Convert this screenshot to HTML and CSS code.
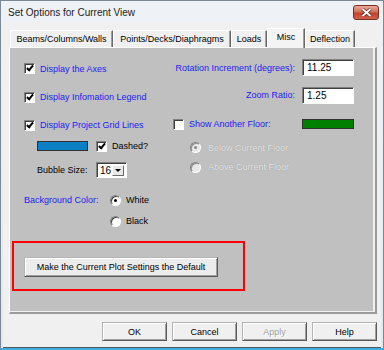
FILE: index.html
```html
<!DOCTYPE html>
<html lang="en">

<head>
  <meta charset="UTF-8">
  <title>Set Options for Current View</title>
  <link rel="stylesheet" href="styles.css">
</head>

<body>

  <div class="window">
    <div class="titlebar">
      <span class="title">Set Options for Current View</span>
      <span class="close">
        <svg width="11" height="9" viewBox="0 0 11 9">
          <path d="M1.5 1 L9.5 8 M9.5 1 L1.5 8" stroke="#5a2018" stroke-width="3.2" />
          <path d="M1.5 1 L9.5 8 M9.5 1 L1.5 8" stroke="#fff" stroke-width="1.8" />
        </svg>
      </span>
    </div>

    <div class="client">
      <div class="tabs">
        <div class="tab tab-beams">Beams/Columns/Walls</div>
        <div class="tab tab-points">Points/Decks/Diaphragms</div>
        <div class="tab tab-loads">Loads</div>
        <div class="tab tab-misc active">Misc</div>
        <div class="tab tab-deflection">Deflection</div>
      </div>

      <div class="page">
        <div class="panel">
          <div class="columns">
            <!-- left side -->
            <div class="col-left">
              <div class="row">
                <span class="check on"></span>
                <span class="label blue">Display the Axes</span>
              </div>
              <div class="row">
                <span class="check on"></span>
                <span class="label blue">Display Infomation Legend</span>
              </div>
              <div class="row">
                <span class="check on"></span>
                <span class="label blue">Display Project Grid Lines</span>
              </div>
              <div class="row indent">
                <span class="swatch swatch-blue"></span>
                <span class="check on"></span>
                <span class="label">Dashed?</span>
              </div>
              <div class="row indent">
                <span class="label bubble-label">Bubble Size:</span>
                <span class="combo">
                  <span class="combo-value">16</span>
                  <span class="combo-arrow"></span>
                </span>
              </div>
              <div class="row">
                <span class="label blue bg-label">Background Color:</span>
                <span class="radio on"></span>
                <span class="label">White</span>
              </div>
              <div class="row radio-only">
                <span class="radio"></span>
                <span class="label">Black</span>
              </div>
            </div>

            <!-- right side -->
            <div class="col-right">
              <div class="row field">
                <span class="label blue">Rotation Increment (degrees):</span>
                <span class="textbox">11.25</span>
              </div>
              <div class="row field">
                <span class="label blue">Zoom Ratio:</span>
                <span class="textbox">1.25</span>
              </div>
              <div class="row">
                <span class="check"></span>
                <span class="label blue">Show Another Floor:</span>
                <span class="swatch swatch-green"></span>
              </div>
              <div class="row sub">
                <span class="radio disabled on"></span>
                <span class="label muted">Below Current Floor</span>
              </div>
              <div class="row sub">
                <span class="radio disabled"></span>
                <span class="label muted">Above Current Floor</span>
              </div>
            </div>
          </div>

          <div class="highlight">
            <button class="btn btn-default">Make the Current Plot Settings the Default</button>
          </div>
        </div>
      </div>

      <div class="footer">
        <button class="btn">OK</button>
        <button class="btn">Cancel</button>
        <button class="btn" disabled>Apply</button>
        <button class="btn">Help</button>
      </div>
    </div>
  </div>

</body>

</html>
```

FILE: styles.css
```css
body {
  margin: 0;
  font-family: "Liberation Sans", Arial, sans-serif;
  font-size: 9px;
  color: #000;
  background-color: #fff;
}

.window {
  width: 384px;
  height: 350px;
  box-sizing: border-box;
  display: flex;
  flex-direction: column;
  background: linear-gradient(#eef2f6, #e2e8ef);
  border: 1px solid #7d8895;
  border-bottom: 2px solid #3fb0dc;
  padding: 0 2px;
}

.titlebar {
  height: 21px;
  display: flex;
  align-items: center;
  justify-content: space-between;
  padding-left: 5px;
}

.title {
  font-size: 10px;
  color: #1c1c1c;
  padding-top: 2px;
}

.close {
  width: 26px;
  height: 15px;
  box-sizing: border-box;
  margin-right: 2px;
  margin-top: 2px;
  display: flex;
  align-items: center;
  justify-content: center;
  border: 1px solid #7b2e22;
  border-radius: 3px;
  background: linear-gradient(#e9a99c, #d46f5c 45%, #c2412b 55%, #d0634c);
}

.client {
  flex: 1;
  background-color: #f0f0f0;
  border-bottom: 1px solid #4e5865;
  display: flex;
  flex-direction: column;
}

/* tab strip */
.tabs {
  display: flex;
  height: 19px;
  margin-top: 6px;
  padding-left: 7px;
  align-items: flex-end;
}

.tab {
  height: 17px;
  box-sizing: border-box;
  display: flex;
  align-items: center;
  justify-content: center;
  background-color: #f0f0f0;
  border-top: 1px solid #fff;
  border-left: 1px solid #fff;
  border-right: 1px solid #6a6a6a;
  box-shadow: inset -1px 0 #a0a0a0;
  padding-bottom: 1px;
}

.tab-beams { width: 103px; }
.tab-points { width: 118px; }
.tab-loads { width: 36px; }
.tab-misc { width: 38px; }
.tab-deflection { width: 50px; }

.tab.active {
  height: 20px;
  margin-bottom: -1px;
  position: relative;
  background-color: #f4f4f4;
  padding-bottom: 3px;
}

/* tab page */
.page {
  margin-left: 6px;
  width: 368px;
  height: 267px;
  box-sizing: border-box;
  border-top: 1px solid #fff;
  border-left: 1px solid #fff;
  border-right: 2px solid #9a9a9a;
  border-bottom: 2px solid #9a9a9a;
  padding: 0 2px 1px 0;
}

.panel {
  height: 100%;
  background-color: #c0c0c0;
  padding: 6px 0 0 14px;
  box-sizing: border-box;
}

.columns {
  display: flex;
}

.col-left {
  width: 149px;
  display: grid;
  grid-template-rows: 29px 28px 28px 14px 33px 28px 14px;
}

.col-right {
  width: 181px;
  display: grid;
  grid-template-rows: 27px 28px 30px 17px 22px;
  align-content: start;
}

.row {
  display: flex;
  align-items: center;
  white-space: nowrap;
}

.row .check + .label,
.row .radio + .label {
  margin-left: 5px;
}

.indent {
  padding-left: 13px;
}

.field {
  justify-content: flex-end;
  gap: 7px;
}

.sub {
  padding-left: 17px;
}

.sub .radio + .label {
  margin-left: 7px;
}

.blue {
  color: #1c1cf4;
}

.muted {
  color: #e8e8e8;
  text-shadow: 0 0 1px #8c8c8c;
}

/* checkbox */
.check {
  position: relative;
  width: 11px;
  height: 11px;
  box-sizing: border-box;
  flex-shrink: 0;
  background-color: #fff;
  border: 1px solid;
  border-color: #808080 #fff #fff #808080;
  box-shadow: inset 1px 1px #404040;
}

.check.on::after {
  content: "";
  position: absolute;
  left: 3px;
  top: 0px;
  width: 2px;
  height: 5px;
  border-right: 2px solid #000;
  border-bottom: 2px solid #000;
  transform: rotate(40deg);
}

.indent .check {
  margin-left: 8px;
}

/* radio */
.radio {
  position: relative;
  width: 11px;
  height: 11px;
  box-sizing: border-box;
  flex-shrink: 0;
  border-radius: 50%;
  background-color: #fff;
  border: 1px solid;
  border-color: #808080 #fff #fff #808080;
  box-shadow: inset 1px 1px #404040;
}

.radio.on::after {
  content: "";
  position: absolute;
  left: 3px;
  top: 3px;
  width: 3px;
  height: 3px;
  border-radius: 50%;
  background-color: #000;
}

.radio.disabled {
  background-color: #e8e8e8;
  box-shadow: inset 1px 1px #909090;
}

.radio.disabled.on::after {
  background-color: #8a8a8a;
}

.bg-label {
  width: 86px;
}

.radio-only {
  padding-left: 86px;
}

/* colour swatches */
.swatch {
  height: 10px;
  box-sizing: border-box;
  border: 1px solid #303030;
  flex-shrink: 0;
}

.swatch-blue {
  width: 51px;
  background-color: #0a7fc4;
}

.swatch-green {
  width: 52px;
  margin-left: auto;
  background-color: #007f00;
}

/* text boxes and combo */
.textbox,
.combo {
  box-sizing: border-box;
  background-color: #fff;
  border: 1px solid;
  border-color: #808080 #fff #fff #808080;
  box-shadow: inset 1px 1px #404040;
  font-size: 10px;
}

.textbox {
  width: 52px;
  height: 17px;
  display: flex;
  align-items: center;
  padding-left: 4px;
}

.bubble-label {
  width: 59px;
}

.combo {
  width: 31px;
  height: 16px;
  display: flex;
  align-items: stretch;
  padding: 2px 2px 1px 3px;
}

.combo-value {
  flex: 1;
  display: flex;
  align-items: center;
}

.combo-arrow {
  width: 12px;
  box-sizing: border-box;
  background-color: #e8e8e8;
  border: 1px solid;
  border-color: #fff #6a6a6a #6a6a6a #fff;
  display: flex;
  align-items: center;
  justify-content: center;
}

.combo-arrow::after {
  content: "";
  border-left: 3px solid transparent;
  border-right: 3px solid transparent;
  border-top: 3px solid #000;
  margin-top: 1px;
}

/* highlighted default button */
.highlight {
  width: 233px;
  height: 50px;
  box-sizing: border-box;
  margin: 13px 0 0 -12px;
  border: 2px solid #ff0000;
  padding: 14px 0 0 10px;
}

.btn {
  font-family: inherit;
  font-size: 9px;
  color: #000;
  height: 19px;
  width: 65px;
  padding: 0;
  box-sizing: border-box;
  background-color: #f0f0f0;
  border: 1px solid;
  border-color: #b4b4b4 #5a5a5a #5a5a5a #b4b4b4;
  box-shadow: inset 1px 1px #fff, inset -1px -1px #a0a0a0;
}

.btn:disabled {
  color: #a0a0a0;
  text-shadow: 1px 1px 0 #fff;
}

.btn-default {
  width: 194px;
  height: 20px;
  background-color: #ececec;
}

.footer {
  display: flex;
  justify-content: flex-end;
  gap: 5px;
  margin-top: 8px;
  padding-right: 4px;
}
```
